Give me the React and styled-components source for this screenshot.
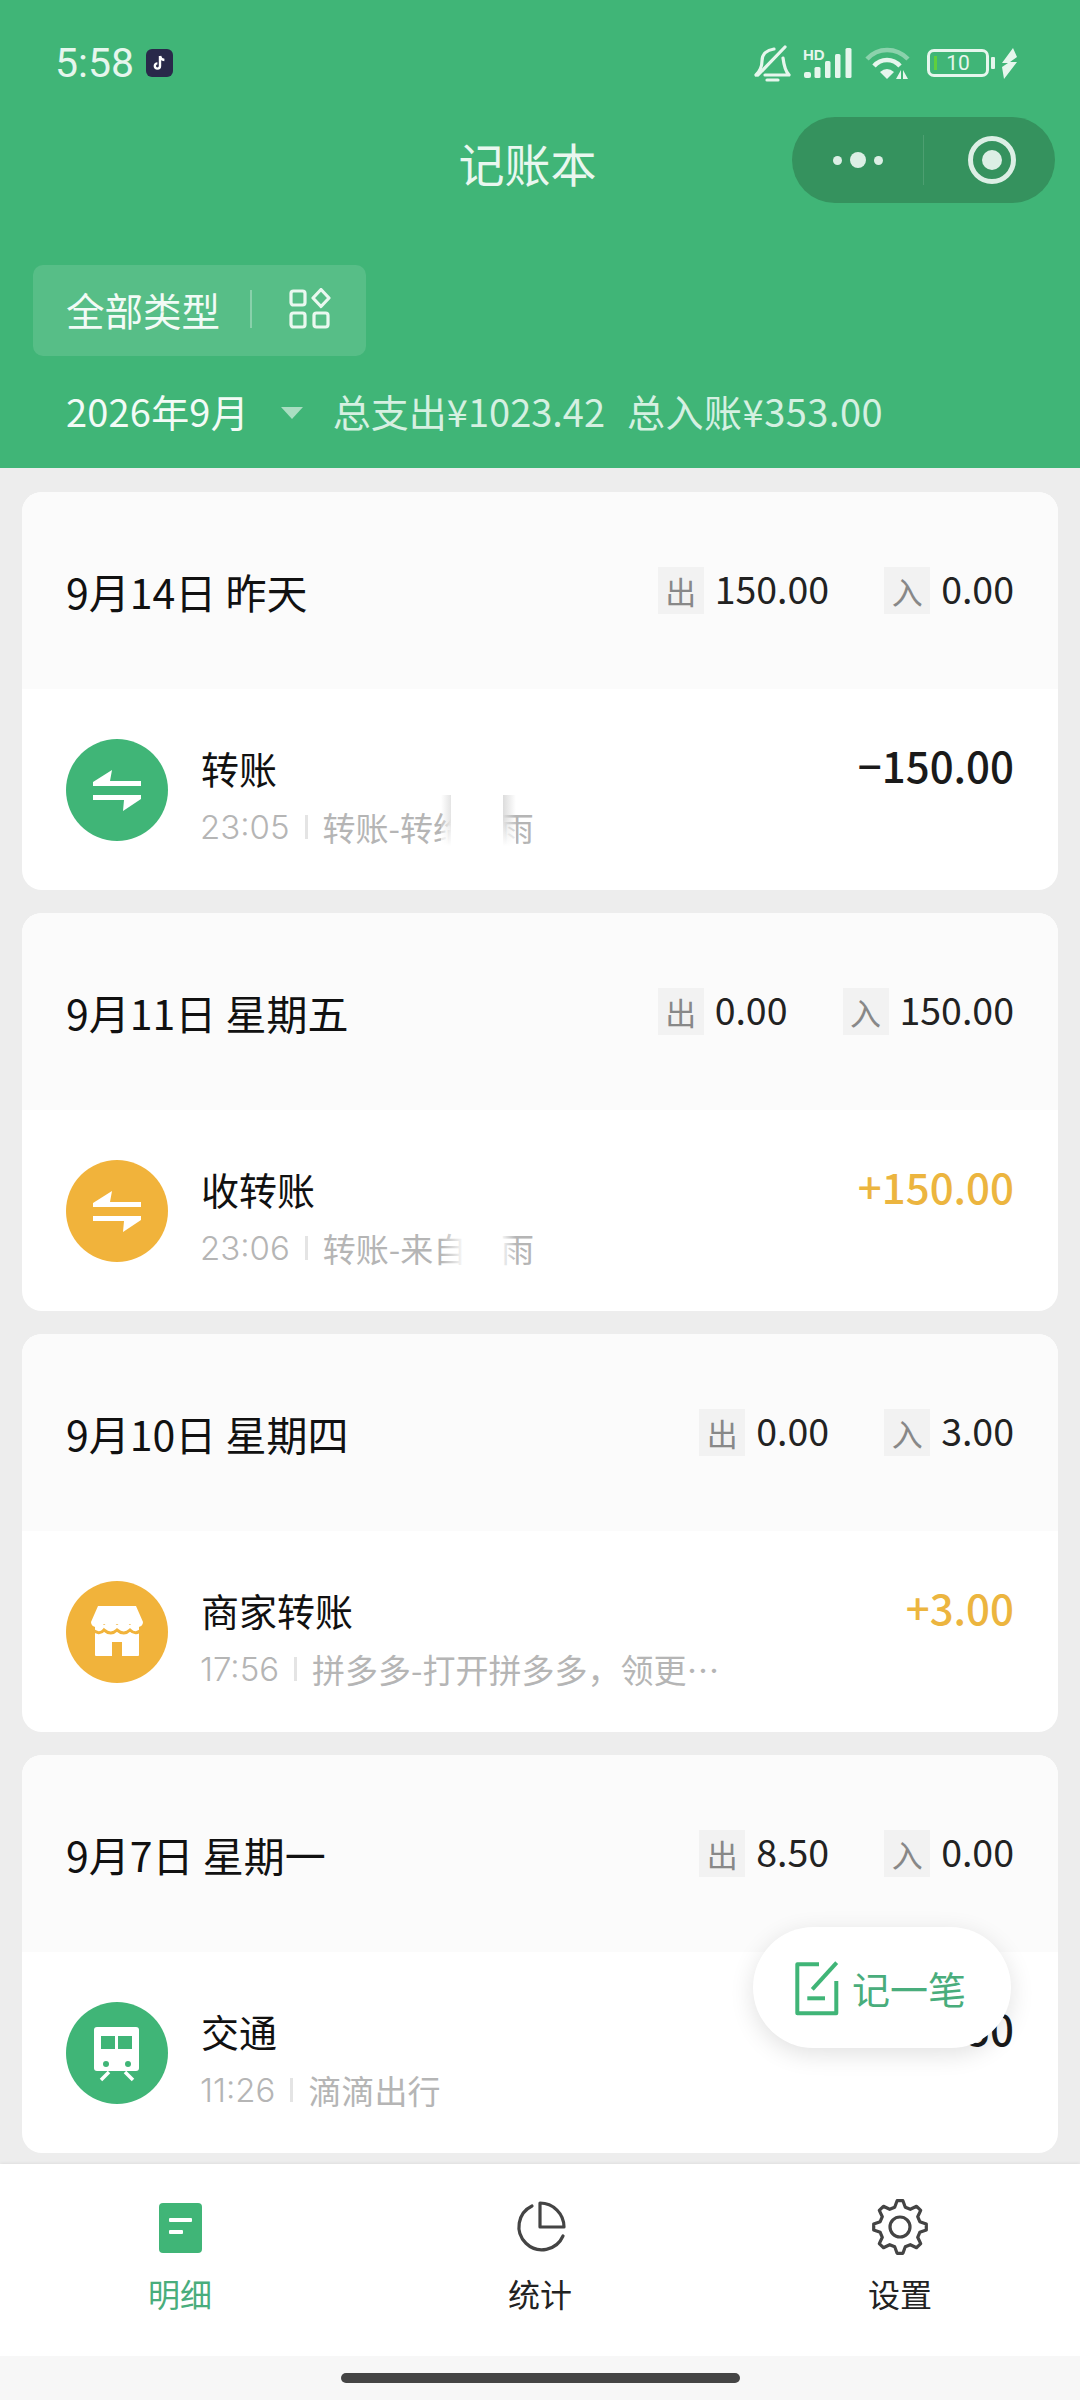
import React from "react";
import styled, { createGlobalStyle } from "styled-components";

const GREEN = "#40b577";
const YELLOW = "#f1b33b";

const GlobalStyle = createGlobalStyle`
  html, body {
    margin: 0;
    padding: 0;
    background: #ededed;
  }
  * {
    box-sizing: border-box;
  }
`;

const Page = styled.div`
  position: relative;
  width: 1080px;
  height: 2400px;
  display: flex;
  flex-direction: column;
  overflow: hidden;
  background: #ededed;
  font-family: "Noto Sans CJK SC", "Noto Sans", sans-serif;
`;

const Header = styled.header`
  flex: none;
  height: 468px;
  background: ${GREEN};
  color: #fff;
`;

const StatusBar = styled.div`
  height: 117px;
  padding: 9px 62px 0 55px;
  display: flex;
  align-items: center;
  justify-content: space-between;
`;

const TimeGroup = styled.div`
  display: flex;
  align-items: center;
  gap: 12px;
`;

const Time = styled.span`
  font-family: "Roboto", sans-serif;
  font-size: 41px;
  color: #e6f6ed;
`;

const AppBadge = styled.div`
  width: 27px;
  height: 28px;
  border-radius: 6px;
  background: #29294a;
  display: flex;
  align-items: center;
  justify-content: center;
`;

const StatusIcons = styled.div`
  display: flex;
  align-items: center;
  gap: 12px;
`;

const Battery = styled.div`
  position: relative;
  width: 62px;
  height: 28px;
  margin-left: 4px;
  border: 3px solid #e6f6ed;
  border-radius: 7px;
  display: flex;
  align-items: center;
  justify-content: center;
  font-family: "Roboto", sans-serif;
  font-size: 21px;
  color: #e6f6ed;

  &::before {
    content: "";
    position: absolute;
    left: 4px;
    top: 4px;
    bottom: 4px;
    width: 3px;
    background: #5fd03c;
  }

  &::after {
    content: "";
    position: absolute;
    right: -9px;
    top: 5px;
    width: 4px;
    height: 12px;
    border-radius: 1px;
    background: #e6f6ed;
  }
`;

const TitleBar = styled.div`
  position: relative;
  height: 86px;
  padding-right: 25px;
  display: flex;
  align-items: center;
  justify-content: center;
`;

const Title = styled.h1`
  margin: 3px 0 0;
  font-size: 46px;
  font-weight: 400;
  line-height: 1;
  color: #e9f7ef;
`;

const Capsule = styled.div`
  position: absolute;
  top: 0;
  right: 25px;
  width: 263px;
  height: 86px;
  border-radius: 43px;
  background: #35925e;
  display: flex;
  align-items: center;
`;

const CapsuleDots = styled.div`
  width: 131px;
  display: flex;
  align-items: center;
  justify-content: center;
  gap: 8px;
`;

const Dot = styled.span`
  width: ${(p) => (p.$big ? 16 : 9)}px;
  height: ${(p) => (p.$big ? 16 : 9)}px;
  border-radius: 50%;
  background: #dcefe5;
`;

const CapsuleDivider = styled.span`
  width: 1px;
  height: 50px;
  background: rgba(255, 255, 255, 0.12);
`;

const Target = styled.div`
  margin-left: 44px;
  width: 48px;
  height: 48px;
  border-radius: 50%;
  border: 5px solid #dcefe5;
  display: flex;
  align-items: center;
  justify-content: center;

  &::after {
    content: "";
    width: 20px;
    height: 20px;
    border-radius: 50%;
    background: #dcefe5;
  }
`;

const Filter = styled.div`
  margin: 62px 0 0 33px;
  width: 333px;
  height: 91px;
  padding: 0 0 3px 33px;
  border-radius: 10px;
  background: rgba(255, 255, 255, 0.12);
  display: flex;
  align-items: center;
  font-size: 38.5px;
  color: #f2fbf6;
`;

const FilterDivider = styled.span`
  width: 2px;
  height: 38px;
  margin: 0 37px 0 30px;
  background: rgba(255, 255, 255, 0.3);
`;

const SummaryRow = styled.div`
  height: 50px;
  margin-top: 29px;
  padding-left: 66px;
  display: flex;
  align-items: center;
  color: #d5f0e1;
`;

const Month = styled.span`
  font-size: 38px;
  letter-spacing: 0.2px;
  color: #f2fbf6;
`;

const Caret = styled.span`
  width: 0;
  height: 0;
  margin: 6px 30px 0 32px;
  border-left: 11px solid transparent;
  border-right: 11px solid transparent;
  border-top: 12px solid rgba(255, 255, 255, 0.55);
`;

const SummaryItem = styled.span`
  font-size: 38px;
  letter-spacing: ${(p) => (p.$wide ? 0.5 : 0)}px;
  margin-right: 22px;
`;

const List = styled.main`
  flex: 1;
  padding: 24px 22px 0;
  display: flex;
  flex-direction: column;
  gap: 23px;
  overflow: hidden;
`;

const Card = styled.section`
  flex: none;
  height: 398px;
  border-radius: 20px;
  overflow: hidden;
  background: #fff;
`;

const CardHead = styled.div`
  height: 197px;
  padding: 0 44px;
  background: #fbfbfb;
  display: flex;
  align-items: center;
  justify-content: space-between;
`;

const DayLabel = styled.span`
  font-size: 41px;
  color: #111;
`;

const DayStats = styled.div`
  display: flex;
  align-items: center;
  gap: 55px;
`;

const DayStat = styled.div`
  display: flex;
  align-items: center;
  gap: 11px;
  font-size: 37.5px;
  color: #222;
`;

const StatValue = styled.span`
  margin-bottom: 6px;
`;

const StatTag = styled.span`
  width: 46px;
  height: 47px;
  background: #f2f2f2;
  color: #888;
  font-size: 31px;
  display: flex;
  align-items: center;
  justify-content: center;
`;

const Row = styled.div`
  height: 201px;
  padding: 0 44px;
  display: flex;
  align-items: center;
`;

const IconCircle = styled.div`
  flex: none;
  width: 102px;
  height: 102px;
  border-radius: 50%;
  background: ${(p) => p.$color};
  svg {
    display: block;
  }
`;

const RowBody = styled.div`
  flex: 1;
  min-width: 0;
  margin-left: 33px;
  padding-top: 12px;
  display: flex;
  flex-direction: column;
  gap: 8px;
`;

const RowTop = styled.div`
  display: flex;
  align-items: center;
  justify-content: space-between;
  height: 54px;
`;

const RowTitle = styled.span`
  font-size: 38px;
  color: #111;
`;

const Amount = styled.span`
  font-size: 42px;
  font-weight: 500;
  margin-bottom: 6px;
  color: ${(p) => (p.$income ? "#ecb53f" : "#1a1a1a")};
`;

const RowSub = styled.div`
  height: 48px;
  display: flex;
  align-items: center;
  font-size: 33px;
  color: #b5b5b5;
`;

const SubTime = styled.span`
  margin-left: -1px;
  font-family: "Inter", sans-serif;
  font-size: 33px;
  font-weight: 300;
`;

const SubDivider = styled.span`
  width: 3px;
  height: 24px;
  margin: 0 15px;
  background: #e4e4e4;
`;

// white patch over the hidden part of a name, $hard gives the grey smear edges
const Masked = styled.span`
  position: relative;
  display: inline-block;
  width: 1.05em;
  height: 1em;

  &::after {
    content: "";
    position: absolute;
    left: -25px;
    right: -15px;
    top: -13px;
    bottom: -8px;
    background: ${(p) =>
      p.$hard
        ? `linear-gradient(180deg, rgba(255,255,255,0) 45%, #fff 95%),
           linear-gradient(90deg, rgba(232,232,232,0) 0, #e4e4e4 10px, #fff 10px, #fff calc(100% - 13px), #dcdcdc calc(100% - 13px), rgba(232,232,232,0) 100%)`
        : `linear-gradient(90deg, rgba(255,255,255,0) 0, #fff 24px, #fff calc(100% - 16px), rgba(255,255,255,0) 100%)`};
  }
`;

const Fab = styled.button`
  position: absolute;
  top: 1927px;
  right: 69px;
  width: 258px;
  height: 121px;
  padding: 0 0 0 41px;
  border: 0;
  border-radius: 61px;
  background: #fff;
  box-shadow: 0 6px 24px rgba(0, 0, 0, 0.12);
  display: flex;
  align-items: center;
  gap: 12px;
  font-family: inherit;
  font-size: 38px;
  color: #49ad7c;
`;

const Nav = styled.nav`
  flex: none;
  height: 192px;
  background: #fff;
  box-shadow: 0 -1px 3px rgba(0, 0, 0, 0.06);
  display: grid;
  grid-template-columns: repeat(3, 360px);
`;

const NavItem = styled.div`
  padding-top: 33px;
  display: flex;
  flex-direction: column;
  align-items: center;
  font-size: 32px;
  line-height: 44px;
  color: ${(p) => (p.$active ? "#49ad7c" : "#222")};
`;

const NavIcon = styled.div`
  width: 60px;
  height: 60px;
  margin-bottom: 14px;
  svg {
    display: block;
  }
`;

const HomeArea = styled.div`
  flex: none;
  height: 44px;
  padding-top: 17px;
  background: #f7f7f7;
  display: flex;
  justify-content: center;
`;

const HomeBar = styled.div`
  width: 399px;
  height: 10px;
  border-radius: 5px;
  background: #444;
`;

const TikTokIcon = () => (
  <svg width="16" height="18" viewBox="0 0 16 18">
    <path d="M8 2v10a2.6 2.6 0 1 1-2.6-2.6M8 2c.4 2.4 2 3.8 4.4 4" fill="none" stroke="#fff" strokeWidth="2.4" />
  </svg>
);

const BellOffIcon = () => (
  <svg width="37" height="38" viewBox="0 0 37 38" fill="none" stroke="#e6f6ed" strokeWidth="3.2" strokeLinecap="round" strokeLinejoin="round">
    <path d="M2 31C6 27 8 23 8 17C8 10 13 6 20 5" />
    <path d="M29 14C30 22 31 27 35 31H11" />
    <path d="M31 3L4 31" />
    <path d="M13 36H24" />
  </svg>
);

const SignalIcon = () => (
  <svg width="50" height="32" viewBox="0 0 50 32" fill="#e6f6ed">
    <text x="0" y="13" fontFamily="Liberation Sans, sans-serif" fontSize="15" fontWeight="700" fill="#e6f6ed">HD</text>
    <rect x="1" y="25" width="7" height="6" rx="2" />
    <rect x="11.5" y="20" width="6" height="11" rx="1.5" />
    <rect x="22" y="14" width="5.5" height="17" rx="1.5" />
    <rect x="32" y="7" width="5.5" height="24" rx="1.5" />
    <rect x="42.5" y="1" width="6" height="30" rx="1.5" />
  </svg>
);

const WifiIcon = () => (
  <svg width="46" height="34" viewBox="0 0 46 34" fill="none">
    <path d="M2 13C13 1 31 1 43 13" stroke="#e6f6ed" strokeOpacity="0.45" strokeWidth="4.5" />
    <path d="M9 20C16 12 28 12 35 20" stroke="#e6f6ed" strokeWidth="4.5" />
    <path d="M15 26Q22 20 29 26L22 33Z" fill="#e6f6ed" />
    <path d="M36 24V33L31 33Z M38 24V33L43 33Z" fill="#e6f6ed" />
  </svg>
);

const BoltIcon = () => (
  <svg width="17" height="31" viewBox="0 0 17 31" fill="#e6f6ed">
    <path d="M12 0L1 15H7L1 19L3 31L16 14H9L16 9Z" />
  </svg>
);

const GridIcon = () => (
  <svg width="42" height="42" viewBox="0 0 42 42" fill="none" stroke="#eaf8f0" strokeWidth="3.2" strokeLinejoin="round">
    <rect x="2" y="3" width="14" height="14" rx="2.5" />
    <rect x="2" y="25" width="14" height="14" rx="2.5" />
    <rect x="25" y="25" width="14" height="14" rx="2.5" />
    <path d="M32 1.5L40 10L32 18.5L24 10Z" />
  </svg>
);

const SwapIcon = () => (
  <svg width="102" height="102" viewBox="0 0 102 102" fill="#fff">
    <path d="M27 47V43L46 31L44 42H75V47Z" />
    <path d="M75 56V60L57 72L58 61H27V56Z" />
  </svg>
);

const ShopIcon = ({ bg }) => (
  <svg width="102" height="102" viewBox="0 0 102 102" fill="#fff">
    <rect x="29" y="44" width="44" height="31" rx="1" />
    <rect x="46" y="61" width="10" height="14" fill={bg} />
    <path d="M26 48Q33 55 38 49Q45 55 51 49Q58 55 64 49Q70 55 76 48" fill="none" stroke={bg} strokeWidth="3" />
    <path d="M32 25H70L77 41Q77 46 71 46Q66 46 64 43Q58 49 51 43Q45 49 38 43Q36 46 31 46Q25 46 25 41Z" />
  </svg>
);

const TrainIcon = ({ bg }) => (
  <svg width="102" height="102" viewBox="0 0 102 102">
    <rect x="28" y="25" width="45" height="44" rx="3" fill="#fff" />
    <rect x="35" y="34" width="14" height="13" fill={bg} />
    <rect x="52" y="34" width="14" height="13" fill={bg} />
    <circle cx="40" cy="62" r="3" fill={bg} />
    <circle cx="62" cy="62" r="3" fill={bg} />
    <path d="M43 70L35 78M59 70L67 78" stroke="#fff" strokeWidth="3.5" />
  </svg>
);

const PenIcon = () => (
  <svg width="46" height="58" viewBox="0 0 46 58" fill="none" stroke={GREEN} strokeWidth="4">
    <path d="M25 5.3H3.3V54.3H42.3V22" strokeLinejoin="round" />
    <path d="M42.7 3.7L18.3 30.3" />
    <path d="M13.3 39.3H31" />
  </svg>
);

const DocIcon = () => (
  <svg width="60" height="60" viewBox="0 0 60 60">
    <rect x="9" y="6" width="43" height="50" rx="4" fill={GREEN} />
    <rect x="19" y="21" width="23" height="4" rx="1" fill="#fff" />
    <rect x="19" y="33" width="14" height="4" rx="1" fill="#fff" />
  </svg>
);

const PieIcon = () => (
  <svg width="60" height="60" viewBox="0 0 60 60" fill="none" stroke="#444" strokeWidth="3.2">
    <path d="M30 6V30H54A24 24 0 0 0 30 6Z" strokeLinejoin="round" />
    <path d="M22 9A23 23 0 1 0 53 39" strokeLinecap="round" />
  </svg>
);

// 8 tooth gear, one tooth straight up
const gearPath = (() => {
  const cx = 30;
  const cy = 30;
  const pts = [];
  for (let i = 0; i < 8; i++) {
    const a = (i * Math.PI) / 4 - Math.PI / 2;
    [
      [-0.26, 20.5],
      [-0.11, 26.5],
      [0.11, 26.5],
      [0.26, 20.5],
    ].forEach(([da, r]) => {
      pts.push(`${(cx + r * Math.cos(a + da)).toFixed(1)} ${(cy + r * Math.sin(a + da)).toFixed(1)}`);
    });
  }
  return `M${pts.join("L")}Z`;
})();

const GearIcon = () => (
  <svg width="60" height="60" viewBox="0 0 60 60" fill="none" stroke="#444" strokeWidth="3.2" strokeLinejoin="round">
    <path d={gearPath} />
    <circle cx="30" cy="30" r="10" />
  </svg>
);

const RECORDS = [
  {
    day: "9月14日 昨天",
    out: "150.00",
    in: "0.00",
    color: GREEN,
    Icon: SwapIcon,
    title: "转账",
    amount: "−150.00",
    time: "23:05",
    sub: (
      <>
        转账-转给
        <Masked $hard />
        雨
      </>
    ),
  },
  {
    day: "9月11日 星期五",
    out: "0.00",
    in: "150.00",
    color: YELLOW,
    Icon: SwapIcon,
    title: "收转账",
    amount: "+150.00",
    income: true,
    time: "23:06",
    sub: (
      <>
        转账-来自
        <Masked />
        雨
      </>
    ),
  },
  {
    day: "9月10日 星期四",
    out: "0.00",
    in: "3.00",
    color: YELLOW,
    Icon: ShopIcon,
    title: "商家转账",
    amount: "+3.00",
    income: true,
    time: "17:56",
    sub: "拼多多-打开拼多多，领更…",
  },
  {
    day: "9月7日 星期一",
    out: "8.50",
    in: "0.00",
    color: GREEN,
    Icon: TrainIcon,
    title: "交通",
    amount: "−8.50",
    time: "11:26",
    sub: "滴滴出行",
  },
];

const RecordCard = ({ record }) => {
  const { Icon } = record;
  return (
    <Card>
      <CardHead>
        <DayLabel>{record.day}</DayLabel>
        <DayStats>
          <DayStat>
            <StatTag>出</StatTag>
            <StatValue>{record.out}</StatValue>
          </DayStat>
          <DayStat>
            <StatTag>入</StatTag>
            <StatValue>{record.in}</StatValue>
          </DayStat>
        </DayStats>
      </CardHead>
      <Row>
        <IconCircle $color={record.color}>
          <Icon bg={record.color} />
        </IconCircle>
        <RowBody>
          <RowTop>
            <RowTitle>{record.title}</RowTitle>
            <Amount $income={record.income}>{record.amount}</Amount>
          </RowTop>
          <RowSub>
            <SubTime>{record.time}</SubTime>
            <SubDivider />
            <span>{record.sub}</span>
          </RowSub>
        </RowBody>
      </Row>
    </Card>
  );
};

const App = () => {
  return (
    <Page>
      <GlobalStyle />
      <Header>
        <StatusBar>
          <TimeGroup>
            <Time>5:58</Time>
            <AppBadge>
              <TikTokIcon />
            </AppBadge>
          </TimeGroup>
          <StatusIcons>
            <BellOffIcon />
            <SignalIcon />
            <WifiIcon />
            <Battery>10</Battery>
            <BoltIcon />
          </StatusIcons>
        </StatusBar>
        <TitleBar>
          <Title>记账本</Title>
          <Capsule>
            <CapsuleDots>
              <Dot />
              <Dot $big />
              <Dot />
            </CapsuleDots>
            <CapsuleDivider />
            <Target />
          </Capsule>
        </TitleBar>
        <Filter>
          全部类型
          <FilterDivider />
          <GridIcon />
        </Filter>
        <SummaryRow>
          <Month>2026年9月</Month>
          <Caret />
          <SummaryItem>总支出¥1023.42</SummaryItem>
          <SummaryItem $wide>总入账¥353.00</SummaryItem>
        </SummaryRow>
      </Header>
      <List>
        {RECORDS.map((record) => (
          <RecordCard key={record.day} record={record} />
        ))}
      </List>
      <Nav>
        <NavItem $active>
          <NavIcon>
            <DocIcon />
          </NavIcon>
          明细
        </NavItem>
        <NavItem>
          <NavIcon>
            <PieIcon />
          </NavIcon>
          统计
        </NavItem>
        <NavItem>
          <NavIcon>
            <GearIcon />
          </NavIcon>
          设置
        </NavItem>
      </Nav>
      <HomeArea>
        <HomeBar />
      </HomeArea>
      <Fab>
        <PenIcon />
        记一笔
      </Fab>
    </Page>
  );
};

export default App;
